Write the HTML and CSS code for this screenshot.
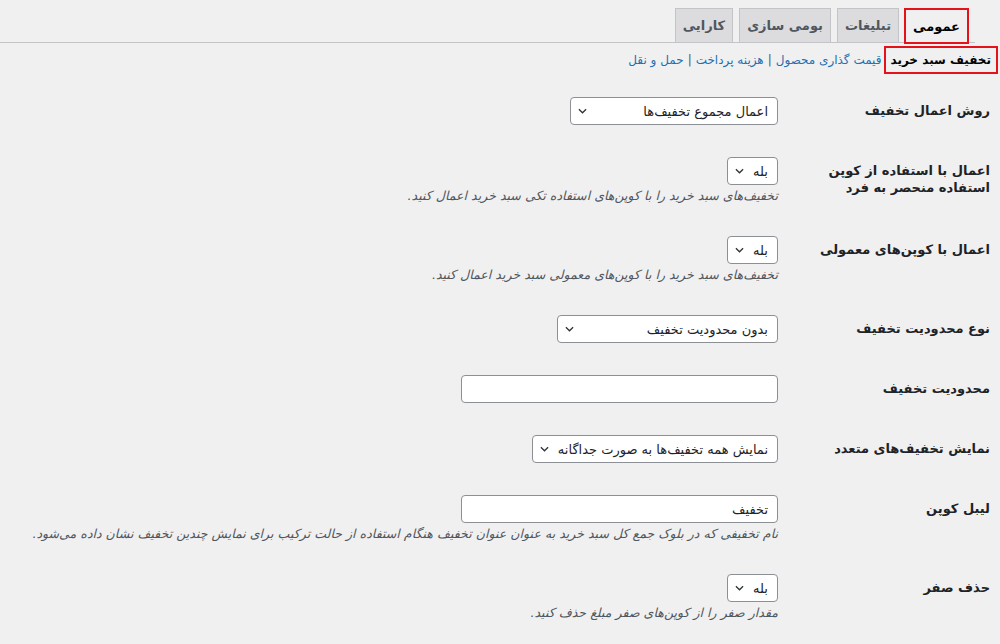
FILE: index.html
```html
<!DOCTYPE html>
<html lang="fa" dir="rtl">
<head>
  <meta charset="UTF-8">
  <meta name="viewport" content="width=device-width, initial-scale=1.0">
  <title>تنظیمات</title>
  <link rel="stylesheet" href="styles.css">
</head>
<body>

<div class="wrap">
  <nav class="nav-tab-wrapper">
    <a class="nav-tab nav-tab-active">عمومی</a>
    <a class="nav-tab">تبلیغات</a>
    <a class="nav-tab">بومی سازی</a>
    <a class="nav-tab">کارایی</a>
  </nav>

  <ul class="subsubsub">
    <li><a class="current">تخفیف سبد خرید</a></li>
    <li><a>قیمت گذاری محصول</a><span class="sep">|</span></li>
    <li><a>هزینه پرداخت</a><span class="sep">|</span></li>
    <li><a>حمل و نقل</a></li>
  </ul>

  <div class="form-table">
    <div class="row">
      <div class="label">روش اعمال تخفیف</div>
      <div class="field">
        <div class="select w-208"><span>اعمال مجموع تخفیف‌ها</span><svg viewBox="0 0 10 6"><path d="M1 1l4 4 4-4"/></svg></div>
      </div>
    </div>

    <div class="row">
      <div class="label">اعمال با استفاده از کوپن<br>استفاده منحصر به فرد</div>
      <div class="field">
        <div class="select w-51"><span>بله</span><svg viewBox="0 0 10 6"><path d="M1 1l4 4 4-4"/></svg></div>
        <p class="description">تخفیف‌های سبد خرید را با کوپن‌های استفاده تکی سبد خرید اعمال کنید.</p>
      </div>
    </div>

    <div class="row">
      <div class="label">اعمال با کوپن‌های معمولی</div>
      <div class="field">
        <div class="select w-51"><span>بله</span><svg viewBox="0 0 10 6"><path d="M1 1l4 4 4-4"/></svg></div>
        <p class="description">تخفیف‌های سبد خرید را با کوپن‌های معمولی سبد خرید اعمال کنید.</p>
      </div>
    </div>

    <div class="row">
      <div class="label">نوع محدودیت تخفیف</div>
      <div class="field">
        <div class="select w-221"><span>بدون محدودیت تخفیف</span><svg viewBox="0 0 10 6"><path d="M1 1l4 4 4-4"/></svg></div>
      </div>
    </div>

    <div class="row">
      <div class="label">محدودیت تخفیف</div>
      <div class="field">
        <input class="text-input" type="text" value="">
      </div>
    </div>

    <div class="row">
      <div class="label">نمایش تخفیف‌های متعدد</div>
      <div class="field">
        <div class="select w-246"><span>نمایش همه تخفیف‌ها به صورت جداگانه</span><svg viewBox="0 0 10 6"><path d="M1 1l4 4 4-4"/></svg></div>
      </div>
    </div>

    <div class="row">
      <div class="label">لیبل کوپن</div>
      <div class="field">
        <input class="text-input" type="text" value="تخفیف">
        <p class="description">نام تخفیفی که در بلوک جمع کل سبد خرید به عنوان عنوان تخفیف هنگام استفاده از حالت ترکیب برای نمایش چندین تخفیف نشان داده می‌شود.</p>
      </div>
    </div>

    <div class="row">
      <div class="label">حذف صفر</div>
      <div class="field">
        <div class="select w-51"><span>بله</span><svg viewBox="0 0 10 6"><path d="M1 1l4 4 4-4"/></svg></div>
        <p class="description">مقدار صفر را از کوپن‌های صفر مبلغ حذف کنید.</p>
      </div>
    </div>
  </div>
</div>

</body>
</html>
```

FILE: styles.css
```css
body {
  margin: 0;
  background: #f0f0f1;
  color: #1d2327;
  font-family: "DejaVu Sans", sans-serif;
  font-size: 13px;
  height: 644px;
  overflow: hidden;
}

.wrap {
  padding-right: 10px;
}

/* tabs */
.nav-tab-wrapper {
  display: flex;
  align-items: flex-end;
  gap: 6px;
  margin-right: 15px;
  padding-right: 6px;
  padding-top: 8px;
  border-bottom: 1px solid #c3c4c7;
}

.nav-tab {
  display: flex;
  align-items: center;
  height: 34px;
  box-sizing: border-box;
  padding: 0 7px;
  border: 1px solid #c3c4c7;
  border-bottom: none;
  background: #dcdcde;
  color: #50575e;
  font-weight: bold;
  font-size: 13px;
}

.nav-tab-active {
  background: #f0f0f1;
  color: #000;
  border: 2px solid #e5121b;
  height: 36px;
  margin-bottom: -2px;
  margin-left: -1px;
}

/* sub links */
.subsubsub {
  list-style: none;
  margin: 3px -8px 0 0;
  padding: 0;
  display: flex;
  align-items: center;
  height: 28px;
  font-size: 12px;
}

.subsubsub a {
  color: #2271b1;
}

.subsubsub .current {
  display: flex;
  align-items: center;
  height: 28px;
  box-sizing: border-box;
  padding: 0 5px 0 4px;
  margin-left: 3px;
  border: 2px solid #e5121b;
  color: #000;
  font-weight: bold;
}

.subsubsub li {
  display: flex;
  align-items: center;
}

.sep {
  color: #50575e;
  margin: 0 4px;
}

/* form rows */
.form-table {
  margin-top: 7px;
}

.row {
  display: grid;
  grid-template-columns: 212px 1fr;
}

.label {
  padding: 21px 0 16px 10px;
  font-weight: bold;
  font-size: 13px;
  line-height: 17px;
  white-space: nowrap;
}

.field {
  padding: 16px 0;
}

.select {
  display: flex;
  align-items: center;
  justify-content: space-between;
  height: 28px;
  box-sizing: border-box;
  padding: 0 9px 0 7px;
  border: 1px solid #8c8f94;
  border-radius: 4px;
  background: #fff;
  font-size: 13px;
}

.select svg {
  width: 9px;
  height: 6px;
  fill: none;
  stroke: #2c3338;
  stroke-width: 1.4;
}

.w-51 { width: 51px; }
.w-208 { width: 208px; }
.w-221 { width: 221px; }
.w-246 { width: 246px; }

.text-input {
  display: block;
  width: 317px;
  height: 28px;
  box-sizing: border-box;
  padding: 0 9px;
  border: 1px solid #8c8f94;
  border-radius: 4px;
  background: #fff;
  font-family: inherit;
  font-size: 13px;
  color: #1d2327;
}

.description {
  margin: 3px 0 0;
  font-size: 12.6px;
  line-height: 16px;
  font-style: italic;
  color: #50575e;
  white-space: nowrap;
}
```
